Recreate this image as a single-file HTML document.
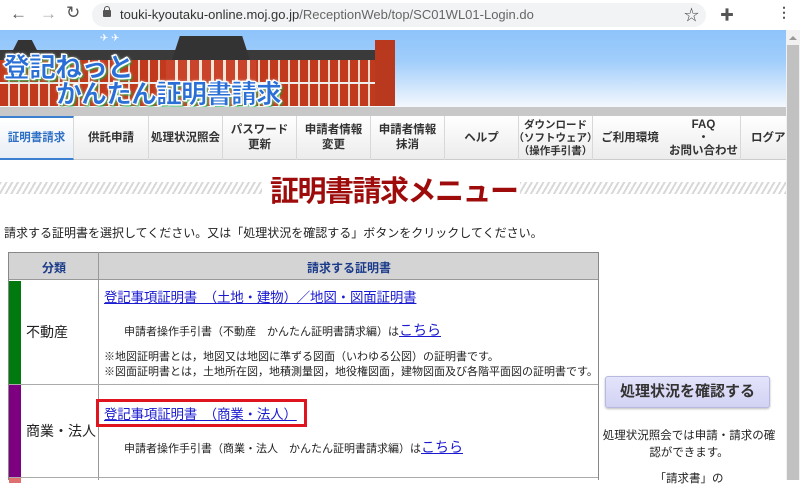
<!DOCTYPE html>
<html><head><meta charset="utf-8"><style>
*{margin:0;padding:0;box-sizing:border-box}
body{width:800px;height:480px;overflow:hidden;position:relative;background:#fff;font-family:"Liberation Sans","Noto Sans CJK JP",sans-serif;color:#222}
.abs{position:absolute}
.nav{position:absolute;top:116px;left:0;width:786px;height:44px;background:linear-gradient(#fff,#ececec);border-bottom:1px solid #ccc;display:flex}
.nav div{height:44px;border-right:1px solid #d8d8d8;display:flex;align-items:center;justify-content:center;text-align:center;font-size:11.5px;font-weight:bold;color:#333;line-height:15px;flex:none;white-space:nowrap}
.logo{font-weight:900;color:#2a6fd6;-webkit-text-stroke:1px #fff;text-shadow:0 0 3px #fff,1px 1px 0 #fff,-1px -1px 0 #fff,2px 2px 2px #0a3;font-family:"Noto Sans CJK JP",sans-serif}
a{color:#1a1ad0;text-decoration:underline}
</style></head><body>
<div class="abs" style="top:0;left:0;width:800px;height:30px;background:#fff"></div>
<div class="abs" style="left:10px;top:4px;font-size:17px;color:#555">&#8592;</div>
<div class="abs" style="left:40px;top:4px;font-size:17px;color:#aaa">&#8594;</div>
<div class="abs" style="left:66px;top:3px;font-size:17px;color:#555">&#8635;</div>
<div class="abs" style="left:92px;top:3px;width:614px;height:24px;border-radius:12px;background:#f1f3f4"></div>
<div class="abs" style="left:103px;top:10px;width:8px;height:7px;background:#555;border-radius:1px"></div>
<div class="abs" style="left:104px;top:6px;width:6px;height:6px;border:1.5px solid #555;border-bottom:none;border-radius:3px 3px 0 0"></div>
<div class="abs" style="left:120px;top:7px;font-size:13px;color:#333">touki-kyoutaku-online.moj.go.jp<span style="color:#666">/ReceptionWeb/top/SC01WL01-Login.do</span></div>
<div class="abs" style="left:684px;top:4px;font-size:15px;color:#444">☆</div>
<div class="abs" style="left:720px;top:5px;font-size:14px;color:#555">✚</div>
<div class="abs" style="left:777px;top:4px;font-size:14px;color:#555;font-weight:bold">⋮</div>
<div class="abs" style="top:30px;left:0;width:786px;height:77px;background:linear-gradient(#8ec4fb 0%,#a0cdfb 40%,#f4f8fd 100%)"></div>
<div class="abs" style="top:50px;left:0;width:385px;height:12px;background:#3a3a3a"></div>
<div class="abs" style="top:60px;left:0;width:385px;height:46px;background:repeating-linear-gradient(90deg,#c13a1e 0 8px,#e8d8c8 8px 10px)"></div>
<div class="abs" style="top:82px;left:0;width:385px;height:2px;background:#eee"></div>
<div class="abs" style="top:40px;left:8px;width:34px;height:20px;background:#333;clip-path:polygon(30% 0,70% 0,100% 100%,0 100%)"></div>
<div class="abs" style="top:36px;left:172px;width:78px;height:24px;background:#333;clip-path:polygon(10% 0,90% 0,100% 100%,0 100%)"></div>
<div class="abs" style="top:60px;left:166px;width:90px;height:46px;background:repeating-linear-gradient(90deg,#c9442a 0 9px,#f2e6d6 9px 12px)"></div>
<div class="abs" style="top:40px;left:375px;width:20px;height:66px;background:#b8391e"></div>
<div class="abs" style="top:33px;left:100px;font-size:10px;color:#fff">✈ ✈</div>
<div class="abs logo" style="top:46px;left:3px;font-size:27px;letter-spacing:-1px">登記ねっと</div>
<div class="abs logo" style="top:74px;left:56px;font-size:26px;letter-spacing:-1px">かんたん証明書請求</div>
<div class="abs" style="top:107px;left:0;width:786px;height:9px;background:#c8c8c8"></div>
<div class="nav">
<div style="width:74px;color:#2d6fc4;border-top:2px solid #3b7fd0;border-bottom:2px solid #3b7fd0;background:linear-gradient(#fff,#e8eef6)">証明書請求</div>
<div style="width:75px">供託申請</div>
<div style="width:74px">処理状況照会</div>
<div style="width:74px">パスワード<br>更新</div>
<div style="width:74px">申請者情報<br>変更</div>
<div style="width:74px">申請者情報<br>抹消</div>
<div style="width:74px">ヘルプ</div>
<div style="width:74px;font-size:10.5px;line-height:13px">ダウンロード<br>（ソフトウェア）<br>（操作手引書）</div>
<div style="width:74px;border-right:none">ご利用環境</div>
<div style="width:74px;line-height:13px">FAQ<br>・<br>お問い合わせ</div>
<div style="width:64px;border-right:none;justify-content:flex-start;padding-left:10px">ログアウ</div>
</div>
<div class="abs" style="top:182px;left:0;width:786px;height:12px;background:repeating-linear-gradient(-60deg,#d8d8d8 0 2px,#fff 2px 5px)"></div>
<div class="abs" style="top:168px;left:262px;width:258px;height:40px;background:#fff"></div>
<div class="abs" style="top:168px;left:270px;font-size:29px;font-weight:bold;color:#9e0b0b;letter-spacing:-1.5px">証明書請求メニュー</div>
<div class="abs" style="top:224px;left:4px;font-size:12px;color:#222">請求する証明書を選択してください。又は「処理状況を確認する」ボタンをクリックしてください。</div>
<div class="abs" style="top:252px;left:8px;width:591px;height:228px;border:1px solid #888;border-bottom:none"></div>
<div class="abs" style="top:253px;left:9px;width:589px;height:27px;background:#d4d4d4;border-bottom:1px solid #999"></div>
<div class="abs" style="top:252px;left:98px;width:1px;height:228px;background:#999"></div>
<div class="abs" style="top:259px;left:42px;font-size:12px;font-weight:bold;color:#1a3a8a">分類</div>
<div class="abs" style="top:259px;left:307px;font-size:12px;font-weight:bold;color:#1a3a8a">請求する証明書</div>
<div class="abs" style="top:281px;left:9px;width:12px;height:103px;background:#007a0e"></div>
<div class="abs" style="top:384px;left:9px;width:589px;height:1px;background:#aaa"></div>
<div class="abs" style="top:385px;left:9px;width:12px;height:92px;background:#7c0080"></div>
<div class="abs" style="top:477px;left:9px;width:589px;height:1px;background:#aaa"></div>
<div class="abs" style="top:478px;left:9px;width:12px;height:5px;background:#e07070"></div>
<div class="abs" style="top:322px;left:26px;font-size:14px">不動産</div>
<div class="abs" style="top:421px;left:26px;font-size:14px">商業・法人</div>
<div class="abs" style="top:286px;left:104px;font-size:13.5px;letter-spacing:-0.2px"><a>登記事項証明書　（土地・建物）／地図・図面証明書</a></div>
<div class="abs" style="top:320px;left:124px;font-size:11px">申請者操作手引書（不動産　かんたん証明書請求編）は<a style="font-size:14px">こちら</a></div>
<div class="abs" style="top:350px;left:104px;font-size:11px;line-height:15px">※地図証明書とは，地図又は地図に準ずる図面（いわゆる公図）の証明書です。<br>※図面証明書とは，土地所在図，地積測量図，地役権図面，建物図面及び各階平面図の証明書です。</div>
<div class="abs" style="top:399px;left:96px;width:211px;height:28px;border:3px solid #e0141e"></div>
<div class="abs" style="top:403px;left:104px;font-size:13.5px;letter-spacing:-0.2px"><a>登記事項証明書　（商業・法人）</a></div>
<div class="abs" style="top:437px;left:124px;font-size:11px">申請者操作手引書（商業・法人　かんたん証明書請求編）は<a style="font-size:14px">こちら</a></div>
<div class="abs" style="top:376px;left:605px;width:165px;height:32px;border:1px solid #b8b8e0;border-radius:3px;background:linear-gradient(#e4e4fb,#d2d2f4);box-shadow:0 1px 2px #bbb;text-align:center;font-size:15px;font-weight:bold;color:#333;line-height:30px">処理状況を確認する</div>
<div class="abs" style="top:428px;left:600px;width:178px;text-align:center;font-size:11.5px;line-height:17px">処理状況照会では申請・請求の確認ができます。</div>
<div class="abs" style="top:470px;left:600px;width:178px;text-align:center;font-size:11.5px">「請求書」の</div>
<div class="abs" style="top:30px;left:786px;width:14px;height:450px;background:#f1f1f1"></div>
<div class="abs" style="top:36px;left:789px;width:0;height:0;border-left:4px solid transparent;border-right:4px solid transparent;border-bottom:4px solid #999"></div>
<div class="abs" style="top:45px;left:787px;width:12px;height:435px;background:#c1c1c1"></div>
</body></html>
